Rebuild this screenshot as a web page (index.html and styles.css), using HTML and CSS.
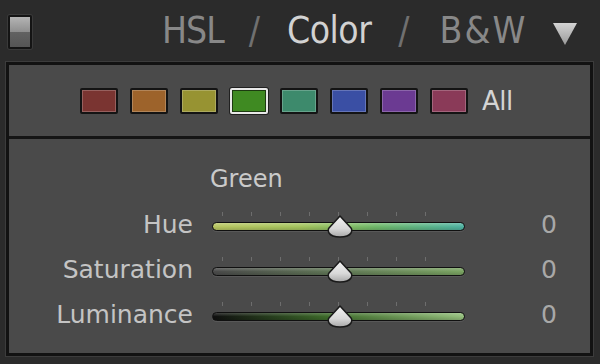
FILE: index.html
```
<!DOCTYPE html>
<html>
<head>
<meta charset="utf-8">
<link rel="stylesheet" href="styles.css">
</head>
<body>
<div class="header">
  <div class="toggle"><div class="toggle-top"></div><div class="toggle-bottom"></div></div>
  <span class="tab tab-hsl">HSL</span>
  <span class="slash slash-1">/</span>
  <span class="tab tab-active">Color</span>
  <span class="slash slash-2">/</span>
  <span class="tab tab-bw">B&amp;W</span>
  <svg class="disclosure" width="24" height="24" viewBox="0 0 24 24">
    <defs><linearGradient id="tg" x1="0" y1="0" x2="0" y2="1"><stop offset="0" stop-color="#d4d4d4"/><stop offset="1" stop-color="#9a9a9a"/></linearGradient></defs>
    <polygon points="0,1 24,1 12,23" fill="url(#tg)"/>
  </svg>
</div>
<div class="panel">
  <div class="swatches">
    <div class="swatch sw-red"></div>
    <div class="swatch sw-orange"></div>
    <div class="swatch sw-yellow"></div>
    <div class="swatch sw-green selected"></div>
    <div class="swatch sw-aqua"></div>
    <div class="swatch sw-blue"></div>
    <div class="swatch sw-purple"></div>
    <div class="swatch sw-magenta"></div>
    <span class="all">All</span>
  </div>
  <div class="sliders">
    <div class="group-title">Green</div>
    <div class="row">
      <div class="label">Hue</div>
      <div class="slider">
        <div class="ticks"></div>
        <div class="track track-hue"></div>
        <svg class="thumb" width="26" height="23" viewBox="0 0 26 23"><use href="#thumbshape"/></svg>
      </div>
      <div class="value">0</div>
    </div>
    <div class="row">
      <div class="label">Saturation</div>
      <div class="slider">
        <div class="ticks"></div>
        <div class="track track-sat"></div>
        <svg class="thumb" width="26" height="23" viewBox="0 0 26 23"><use href="#thumbshape"/></svg>
      </div>
      <div class="value">0</div>
    </div>
    <div class="row">
      <div class="label">Luminance</div>
      <div class="slider">
        <div class="ticks"></div>
        <div class="track track-lum"></div>
        <svg class="thumb" width="26" height="23" viewBox="0 0 26 23"><use href="#thumbshape"/></svg>
      </div>
      <div class="value">0</div>
    </div>
  </div>
</div>
<svg width="0" height="0" class="defs">
  <defs>
    <linearGradient id="thg" x1="0" y1="0" x2="0" y2="1">
      <stop offset="0" stop-color="#f4f4f4"/>
      <stop offset="0.6" stop-color="#d8d8d8"/>
      <stop offset="1" stop-color="#a8a8a8"/>
    </linearGradient>
    <g id="thumbshape">
      <path d="M13 1 L24 13 Q25.5 15 24 18 Q21.5 22 13 22 Q4.5 22 2 18 Q0.5 15 2 13 Z" fill="url(#thg)" stroke="#1a1a1a" stroke-width="1.5" stroke-linejoin="round"/>
    </g>
  </defs>
</svg>
</body>
</html>
```

FILE: styles.css
```
html, body {
  margin: 0;
  padding: 0;
}
body {
  width: 600px;
  height: 364px;
  background: #2b2b2b;
  font-family: "DejaVu Sans", Verdana, sans-serif;
  overflow: hidden;
}
.defs {
  position: absolute;
}
.header {
  height: 62px;
  display: flex;
  align-items: flex-start;
}
.toggle {
  margin: 15px 0 0 8px;
  width: 20px;
  height: 30px;
  border: 2px solid #141414;
  border-radius: 2px;
  box-shadow: 0 0 0 1px #3a3a3a;
  display: flex;
  flex-direction: column;
  overflow: hidden;
}
.toggle-top {
  height: 15px;
  background: linear-gradient(#b4b4b4, #8e8e8e);
}
.toggle-bottom {
  flex: 1;
  background: linear-gradient(#626262, #555555);
}
.tab, .slash {
  font-family: "DejaVu Sans", sans-serif;
  font-stretch: condensed;
  font-size: 37px;
  line-height: 37px;
  margin-top: 12px;
  color: #888888;
  white-space: nowrap;
}
.tab-hsl {
  margin-left: 130px;
  letter-spacing: -1px;
}
.slash {
  color: #707070;
}
.slash-1 {
  margin-left: 25px;
}
.tab-active {
  margin-left: 27px;
  color: #d2d2d2;
  letter-spacing: -0.5px;
}
.slash-2 {
  margin-left: 27px;
}
.tab-bw {
  margin-left: 30px;
  letter-spacing: 2px;
}
.disclosure {
  margin: 22px 0 0 26px;
}
.panel {
  margin-left: 6px;
  width: 581px;
  height: 288px;
  border: 3px solid #121212;
  background: #4a4a4a;
  box-shadow: 0 0 0 1px #3c3c3c;
}
.swatches {
  height: 74px;
  display: flex;
  align-items: center;
  padding-left: 71px;
  gap: 12px;
  border-bottom: 3px solid #151515;
  box-sizing: border-box;
}
.swatch {
  width: 34px;
  height: 22px;
  border: 2px solid #141414;
  box-shadow: inset 0 0 0 1px rgba(255,255,255,0.22);
  border-radius: 2px;
  flex: none;
}
.sw-red { background: #7a3431; }
.sw-orange { background: #9d632b; }
.sw-yellow { background: #979332; }
.sw-green { background: #3f8a22; }
.sw-aqua { background: #3d8a6c; }
.sw-blue { background: #3a4fa4; }
.sw-purple { background: #6b3a92; }
.sw-magenta { background: #8a3a58; }
.swatch.selected {
  border-color: #e8e8e8;
  box-shadow: 0 0 0 1px #202020, inset 0 0 0 1px #1c3a10;
}
.all {
  margin-left: 2px;
  font-size: 26px;
  line-height: 26px;
  color: #d4d4d4;
  letter-spacing: -0.5px;
}
.sliders {
  padding-top: 28px;
}
.group-title {
  margin-left: 201px;
  font-size: 24px;
  line-height: 24px;
  color: #cacaca;
  margin-bottom: 11px;
}
.row {
  display: flex;
  align-items: flex-start;
  height: 45px;
}
.label {
  width: 184px;
  text-align: right;
  font-size: 25px;
  line-height: 45px;
  color: #c4c4c4;
  white-space: nowrap;
}
.slider {
  position: relative;
  margin-left: 19px;
  width: 253px;
  height: 45px;
}
.ticks {
  position: absolute;
  left: 10px;
  top: 10px;
  width: 232px;
  height: 4px;
  background: repeating-linear-gradient(to right, rgba(200,200,200,0.28) 0 1px, transparent 1px 29px);
}
.track {
  margin-top: 20px;
  height: 7px;
  border: 1.5px solid #101010;
  border-radius: 6px;
  box-shadow: 0 1px 0 rgba(255,255,255,0.08);
}
.track-hue {
  background:
    linear-gradient(rgba(255,255,255,0.25), rgba(0,0,0,0) 50%, rgba(0,0,0,0.15)),
    linear-gradient(to right, #b9c662, #a4c45e 35%, #70b86a 65%, #4fb2a2);
}
.track-sat {
  background:
    linear-gradient(rgba(255,255,255,0.2), rgba(0,0,0,0) 50%, rgba(0,0,0,0.15)),
    linear-gradient(to right, #4a4a4a, #5f7456 45%, #7aa462);
}
.track-lum {
  background:
    linear-gradient(rgba(255,255,255,0.2), rgba(0,0,0,0) 50%, rgba(0,0,0,0.15)),
    linear-gradient(to right, #101010, #3d6a2a 45%, #94be7c);
}
.thumb {
  position: absolute;
  left: 115px;
  top: 13px;
}
.value {
  width: 92px;
  text-align: right;
  font-size: 25px;
  line-height: 45px;
  color: #a8a8a8;
}
```
